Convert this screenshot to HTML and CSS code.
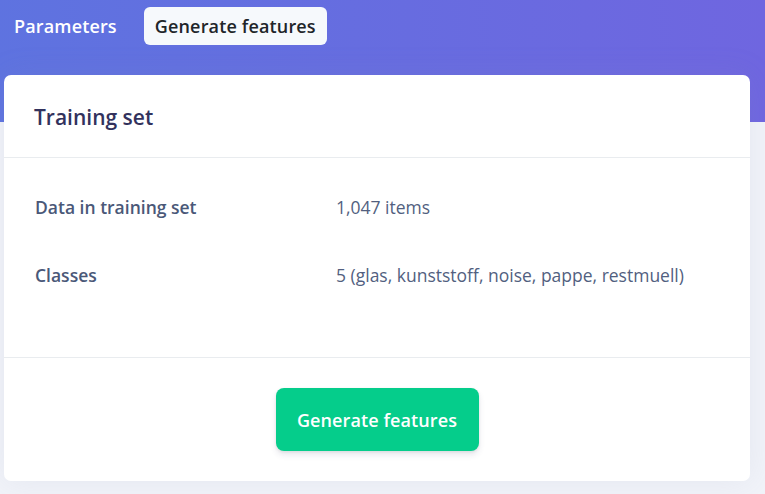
FILE: index.html
```html
<!DOCTYPE html>
<html lang="en">
<head>
<meta charset="utf-8">
<title>Generate features</title>
<link rel="stylesheet" href="styles.css">
</head>
<body>
  <nav class="tabs">
    <a class="tab">Parameters</a>
    <a class="tab tab-active">Generate features</a>
  </nav>
  <section class="card">
    <header class="card-header">
      <h3 class="card-title">Training set</h3>
    </header>
    <div class="card-body">
      <div class="row">
        <div class="label">Data in training set</div>
        <div class="value">1,047 items</div>
      </div>
      <div class="row">
        <div class="label">Classes</div>
        <div class="value">5 (glas, kunststoff, noise, pappe, restmuell)</div>
      </div>
    </div>
    <footer class="card-footer">
      <button class="btn-success">Generate features</button>
    </footer>
  </section>
</body>
</html>
```
FILE: styles.css
```css
html, body {
  margin: 0;
  padding: 0;
}
body {
  font-family: "Open Sans", "Liberation Sans", sans-serif;
  background: linear-gradient(87deg, #5e73e0 0%, #6f66e0 100%) top left / 100% 122px no-repeat, #f1f3f9;
  height: 494px;
  overflow: hidden;
}
.tabs {
  display: flex;
  align-items: center;
  gap: 15px;
  padding: 7px 0 0 2px;
}
.tab {
  display: block;
  height: 38px;
  line-height: 38px;
  padding: 0 12px;
  border-radius: 6px;
  font-size: 18px;
  font-weight: 600;
  letter-spacing: 0.15px;
  color: #ffffff;
}
.tab-active {
  background: #f6f9fc;
  color: #212529;
  padding: 0 11px;
}
.card {
  margin: 30px 15px 0 4px;
  background: #ffffff;
  border-radius: 7px;
  box-shadow: 0 0 2rem 0 rgba(136, 152, 170, 0.12);
}
.card-header {
  height: 83px;
  display: flex;
  align-items: center;
  padding: 0 30px;
  border-bottom: 1px solid #e9ecef;
  box-sizing: border-box;
}
.card-title {
  margin: 0;
  font-size: 21px;
  font-weight: 600;
  color: #32325d;
  padding-top: 2px;
}
.card-body {
  height: 199px;
  box-sizing: border-box;
  padding: 37px 31px 0;
  display: flex;
  flex-direction: column;
  gap: 44px;
}
.row {
  display: flex;
  height: 24px;
  align-items: center;
  font-size: 17.5px;
}
.label {
  width: 301px;
  font-weight: 600;
  color: #4a5878;
}
.value {
  color: #525f7f;
}
.card-footer {
  border-top: 1px solid #e9ecef;
  padding: 30px 0 30px;
  display: flex;
  justify-content: center;
}
.btn-success {
  width: 203px;
  height: 63px;
  border: none;
  border-radius: 8px;
  background: #05cd8b;
  color: #ffffff;
  font-family: "Open Sans", "Liberation Sans", sans-serif;
  font-size: 18px;
  font-weight: 600;
  letter-spacing: 0.1px;
  box-shadow: 0 4px 6px rgba(50, 50, 93, 0.11), 0 1px 3px rgba(0, 0, 0, 0.08);
}
```
